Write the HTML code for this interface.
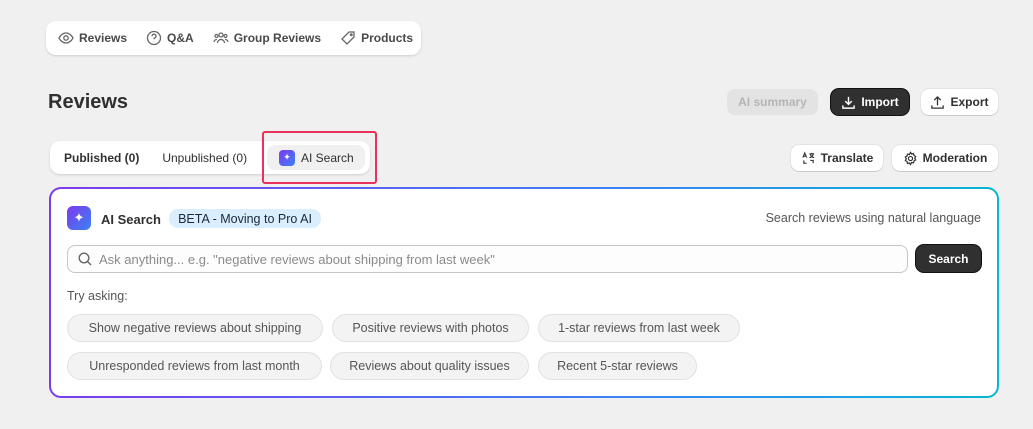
<!DOCTYPE html><html><head><style>
*{box-sizing:border-box;margin:0;padding:0;white-space:nowrap}
body{width:1033px;height:429px;background:#f0f0f0;font-family:"Liberation Sans",sans-serif;color:#303030;position:relative;overflow:hidden;font-size:13px}
.a{position:absolute;display:flex;align-items:center}
.btn{position:absolute;display:flex;align-items:center;justify-content:center;gap:5px;background:#fff;border-radius:8px;box-shadow:0 1px 0 #ccc,0 0 0 1px #e3e3e3;font-weight:bold;font-size:12px;color:#303030}
.chip{position:absolute;height:28px;border:1px solid #e1e1e1;background:#f3f3f3;border-radius:14px;display:flex;align-items:center;justify-content:center;color:#555;font-size:12.5px}
svg{display:block;flex:none}
</style></head><body>
<div class="a" style="left:46px;top:21px;width:375px;height:34px;background:#fff;border-radius:10px;box-shadow:0 1px 2px #ccc;padding-left:12px;gap:0;font-weight:bold;color:#4a4a4a;font-size:12px">
<svg width="16" height="16" viewBox="0 0 16 16" fill="none" stroke="#666" stroke-width="1.3"><path d="M1 8s2.5-5 7-5 7 5 7 5-2.5 5-7 5-7-5-7-5z"/><circle cx="8" cy="8" r="2.2"/></svg><span style="margin:0 19px 0 5px">Reviews</span>
<svg width="16" height="16" viewBox="0 0 16 16" fill="none" stroke="#666" stroke-width="1.3"><circle cx="8" cy="8" r="6.5"/><path d="M6 6.2a2 2 0 1 1 2.5 1.9c-.4.2-.5.6-.5 1.2M8 11.3v.2"/></svg><span style="margin:0 19px 0 5px">Q&amp;A</span>
<svg width="16" height="16" viewBox="0 0 16 16" fill="none" stroke="#666" stroke-width="1.2"><circle cx="8" cy="5" r="2"/><circle cx="3.5" cy="6" r="1.5"/><circle cx="12.5" cy="6" r="1.5"/><path d="M4.5 13a3.5 3.5 0 0 1 7 0M1 12a2.5 2.5 0 0 1 3-2.4M15 12a2.5 2.5 0 0 0-3-2.4"/></svg><span style="margin:0 19px 0 5px">Group Reviews</span>
<svg width="16" height="16" viewBox="0 0 16 16" fill="none" stroke="#666" stroke-width="1.3"><path d="M9 2h5v5l-7 7-5-5z"/><circle cx="11.3" cy="4.7" r=".8"/></svg><span style="margin-left:5px">Products</span>
</div>
<div class="a" style="left:48px;top:91px;font-size:20px;font-weight:bold;color:#303030">Reviews</div>
<div class="btn" style="left:727px;top:89px;width:91px;height:26px;background:#e3e3e3;box-shadow:none;color:#b5b5b5">AI summary</div>
<div class="btn" style="left:831px;top:89px;width:78px;height:26px;background:#303030;color:#fff;box-shadow:0 0 0 1px #111"><svg width="15" height="15" viewBox="0 0 16 16" fill="none" stroke="#fff" stroke-width="1.5"><path d="M8 2v8M4.5 6.5 8 10l3.5-3.5M2 11v3h12v-3"/></svg>Import</div>
<div class="btn" style="left:921px;top:89px;width:77px;height:26px"><svg width="15" height="15" viewBox="0 0 16 16" fill="none" stroke="#333" stroke-width="1.4"><path d="M8 11V2M4.5 5.5 8 2l3.5 3.5M2 11v3h12v-3"/></svg>Export</div>
<div class="a" style="left:50px;top:141px;width:320px;height:33px;background:#fff;border-radius:10px;box-shadow:0 1px 2px #ccc;font-size:12px;font-weight:bold;color:#303030">
<span style="margin-left:14px">Published (0)</span><span style="margin-left:23px;font-weight:normal">Unpublished (0)</span>
<div class="a" style="left:217px;top:4px;width:98px;height:25px;background:#f0f0f0;border-radius:8px;padding-left:12px;gap:6px;font-weight:normal"><div style="width:16px;height:16px;border-radius:4px;background:linear-gradient(135deg,#7c3aed,#3b82f6);color:#fff;font-size:9px;display:flex;align-items:center;justify-content:center">✦</div>AI Search</div>
</div>
<div style="position:absolute;left:262px;top:131px;width:115px;height:53px;border:2px solid #e8325a;border-radius:3px"></div>
<div class="btn" style="left:791px;top:145px;width:92px;height:26px"><svg width="15" height="15" viewBox="0 0 16 16" fill="none" stroke="#333" stroke-width="1.2"><path d="M2 7 4 2l2 5M2.7 5.5h2.6M9 3h5M11.5 2v1M10 3c0 2 2 4 4 4M13 3c0 2-2 4-4 4M3 10v3h3M13 13v-3h-3"/></svg>Translate</div>
<div class="btn" style="left:892px;top:145px;width:106px;height:26px"><svg width="15" height="15" viewBox="0 0 16 16" fill="none" stroke="#333" stroke-width="1.3"><circle cx="8" cy="8" r="2.2"/><path d="M8 1.5l1.2 1.7 2-.5.5 2 1.8 1.2-1 1.8 1 1.8-1.8 1.2-.5 2-2-.5L8 14.5l-1.2-1.7-2 .5-.5-2-1.8-1.2 1-1.8-1-1.8 1.8-1.2.5-2 2 .5z"/></svg>Moderation</div>
<div style="position:absolute;left:49px;top:187px;width:950px;height:211px;border-radius:12px;background:linear-gradient(90deg,#7c3aed,#3b82f6 60%,#06b6d4);padding:2px"><div style="width:100%;height:100%;background:#fff;border-radius:10px"></div></div>
<div style="position:absolute;left:67px;top:206px;width:24px;height:24px;border-radius:6px;background:linear-gradient(135deg,#7c3aed,#3b82f6);color:#fff;display:flex;align-items:center;justify-content:center;font-size:13px">✦</div>
<div class="a" style="left:101px;top:210px;height:18px;font-weight:bold;font-size:13px">AI Search</div>
<div class="a" style="left:169px;top:209px;width:152px;height:19px;background:#d9eefe;border-radius:9px;justify-content:center;font-size:12.5px;color:#1a2a3a">BETA - Moving to Pro AI</div>
<div class="a" style="left:700px;top:211px;width:281px;justify-content:flex-end;font-size:12.5px;color:#555">Search reviews using natural language</div>
<div class="a" style="left:67px;top:245px;width:841px;height:28px;border:1px solid #c5c5c5;border-radius:8px;background:#fdfdfd;padding-left:9px;gap:6px;color:#8a8a8a;font-size:13px"><svg width="16" height="16" viewBox="0 0 16 16" fill="none" stroke="#666" stroke-width="1.4"><circle cx="7" cy="7" r="4.8"/><path d="M10.5 10.5 14 14"/></svg>Ask anything... e.g. "negative reviews about shipping from last week"</div>
<div class="btn" style="left:916px;top:245px;width:65px;height:27px;background:#303030;color:#fff;box-shadow:0 0 0 1px #111">Search</div>
<div class="a" style="left:67px;top:289px;font-size:12.5px;color:#555">Try asking:</div>
<div class="chip" style="left:67px;top:314px;width:256px">Show negative reviews about shipping</div>
<div class="chip" style="left:332px;top:314px;width:197px">Positive reviews with photos</div>
<div class="chip" style="left:538px;top:314px;width:202px">1-star reviews from last week</div>
<div class="chip" style="left:67px;top:352px;width:255px">Unresponded reviews from last month</div>
<div class="chip" style="left:330px;top:352px;width:199px">Reviews about quality issues</div>
<div class="chip" style="left:538px;top:352px;width:159px">Recent 5-star reviews</div>
</body></html>
